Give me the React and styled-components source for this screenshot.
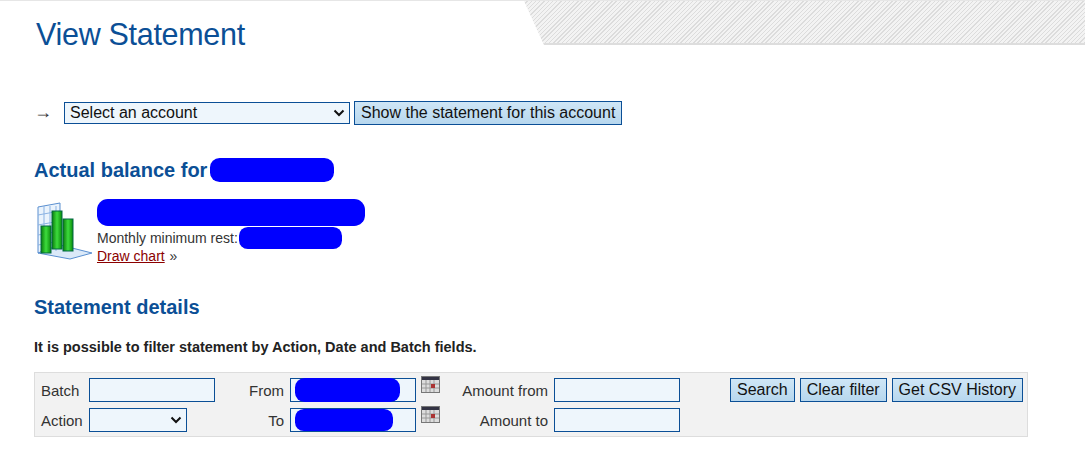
import React from "react";
import styled, { createGlobalStyle } from "styled-components";

const Global = createGlobalStyle`
  body { margin: 0; font-family: "Liberation Sans", Arial, sans-serif; background: #fff; color: #222; }
`;

const Header = styled.div`
  position: relative;
  height: 86px;
  border-top: 1px solid #e6e6e6;
`;
const Hatch = styled.div`
  position: absolute;
  top: 0; right: 0; left: 524px; height: 42px;
  clip-path: polygon(0 0, 100% 0, 100% 100%, 20px 100%);
  background: repeating-linear-gradient(135deg, #f3f3f3 0 2px, #dcdcdc 2px 3px);
  border-bottom: 2px solid #ddd;
`;
const Title = styled.h1`
  margin: 0;
  padding: 16px 0 0 36px;
  font-weight: normal;
  font-size: 30.5px;
  color: #0b4f96;
  letter-spacing: -0.3px;
`;
const Content = styled.div`
  padding: 14px 34px 0 34px;
`;
const SelectRow = styled.div`
  display: flex; align-items: center; gap: 4px; height: 24px;
`;
const Arrow = styled.span`font-size: 18px; margin-right: 8px; color: #333; margin-top: -2px;`;
const Select = styled.div`
  width: 286px; height: 22px; box-sizing: border-box;
  border: 1px solid #0b4f96; background: #eef6fc;
  display: flex; align-items: center; justify-content: space-between;
  padding: 0 4px 0 5px; font-size: 16px; color: #111;
`;
const Button = styled.button`
  height: 24px; box-sizing: border-box;
  border: 1px solid #0b4f96;
  background: linear-gradient(#cfe6f6, #b7d7ee);
  font-family: "Liberation Sans", Arial, sans-serif;
  font-size: 16px; color: #111; padding: 0 6px; margin: 0;
`;
const H2 = styled.h2`
  margin: ${p => p.$mt}px 0 0 0;
  font-size: 20px; font-weight: bold; color: #0b4f96;
  display: flex; align-items: center; gap: 3px; height: 26px;
`;
const Blob = styled.span`
  display: inline-block; background: #0000ff;
  width: ${p => p.$w}px; height: ${p => p.$h}px; border-radius: ${p => p.$h / 2.5}px;
`;
const Balance = styled.div`
  display: flex; gap: 3px; margin-top: 16px;
`;
const Icon = styled.div`margin-top: 2px;`;
const Info = styled.div`
  display: flex; flex-direction: column; font-size: 14px; color: #333; line-height: 13px;
`;
const Line = styled.div`display: flex; align-items: center; gap: 1px; height: ${p => p.$h}px;`;
const Link = styled.a`color: #8b0000; text-decoration: underline;`;
const Note = styled.p`
  margin: 19px 0 0 0; font-size: 14.5px; font-weight: bold; color: #222;
`;
const Panel = styled.div`
  margin-top: 17px; width: 994px; box-sizing: border-box;
  background: #f2f2f2; border: 1px solid #ddd;
  padding: 5px 0 4px 6px;
  display: grid;
  grid-template-columns: 48px 126px 75px 126px 46px 92px 126px 1fr;
  row-gap: 6px; align-items: center;
  font-size: 15px; color: #333;
`;
const Label = styled.span`
  text-align: ${p => (p.$right ? "right" : "left")};
  padding-right: ${p => (p.$right ? 6 : 0)}px;
`;
const Input = styled.div`
  height: 24px; box-sizing: border-box; width: ${p => p.$w || 126}px;
  border: 1px solid #0b4f96; background: #eef6fc;
  display: flex; align-items: center; justify-content: space-between; padding: 0 4px;
`;
const Buttons = styled.div`display: flex; gap: 5px; margin-left: 50px;`;

const Chart = () => (
  <svg width="60" height="60" viewBox="0 0 60 60">
    <defs>
      <linearGradient id="g" x1="0" x2="1">
        <stop offset="0" stopColor="#0a7a0a" /><stop offset="0.5" stopColor="#3ddc3d" /><stop offset="1" stopColor="#0a8a0a" />
      </linearGradient>
    </defs>
    <polygon points="4,6 26,2 26,44 4,52" fill="#eaf3fc" stroke="#5a8fd0" />
    <polygon points="4,52 26,44 58,52 36,58" fill="#dbe9f8" stroke="#5a8fd0" />
    {[10, 16, 22].map(x => <line key={x} x1={x} y1={5} x2={x} y2={50} stroke="#8bb3e3" />)}
    {[14, 24, 34, 44].map(y => <line key={y} x1={4} y1={y} x2={26} y2={y - 4} stroke="#8bb3e3" />)}
    <rect x="7" y="25" width="10" height="27" fill="url(#g)" stroke="#064" />
    <rect x="18" y="10" width="10" height="38" fill="url(#g)" stroke="#064" />
    <rect x="29" y="18" width="10" height="32" fill="url(#g)" stroke="#064" />
  </svg>
);
const Cal = () => (
  <svg width="19" height="17" viewBox="0 0 19 17" style={{ marginLeft: 5, alignSelf: "start", marginTop: -2 }}>
    <rect x="0.5" y="0.5" width="18" height="16" fill="#ddd" stroke="#777" />
    <rect x="1" y="1" width="17" height="3" fill="#334" />
    {[5, 9, 13].map(x => <line key={x} x1={x} y1={4} x2={x} y2={16} stroke="#999" />)}
    {[8, 12].map(y => <line key={y} x1={1} y1={y} x2={18} y2={y} stroke="#999" />)}
    <rect x="10" y="8" width="4" height="4" fill="#a33" />
  </svg>
);
const Chevron = () => (
  <svg width="12" height="8" viewBox="0 0 12 8"><path d="M1.5 1.5 6 6l4.5-4.5" stroke="#111" strokeWidth="2" fill="none" /></svg>
);

export default function App() {
  return (
    <>
      <Global />
      <Header><Hatch /><Title>View Statement</Title></Header>
      <Content>
        <SelectRow>
          <Arrow>→</Arrow>
          <Select>Select an account <Chevron /></Select>
          <Button>Show the statement for this account</Button>
        </SelectRow>
        <H2 $mt={32}>Actual balance for <Blob $w={124} $h={24} /></H2>
        <Balance>
          <Icon><Chart /></Icon>
          <Info>
            <Blob $w={268} $h={27} />
            <Line $h={24}>Monthly minimum rest: <Blob $w={103} $h={22} /></Line>
            <Line $h={12}><Link href="#">Draw chart</Link>&nbsp;»</Line>
          </Info>
        </Balance>
        <H2 $mt={29}>Statement details</H2>
        <Note>It is possible to filter statement by Action, Date and Batch fields.</Note>
        <Panel>
          <Label>Batch</Label><Input />
          <Label $right>From</Label><Input><Blob $w={105} $h={24} /></Input><Cal />
          <Label $right>Amount from</Label><Input />
          <Buttons><Button>Search</Button><Button>Clear filter</Button><Button>Get CSV History</Button></Buttons>
          <Label>Action</Label><Input $w={98}><span /><Chevron /></Input>
          <Label $right>To</Label><Input><Blob $w={98} $h={22} /></Input><Cal />
          <Label $right>Amount to</Label><Input /><span />
        </Panel>
      </Content>
    </>
  );
}
